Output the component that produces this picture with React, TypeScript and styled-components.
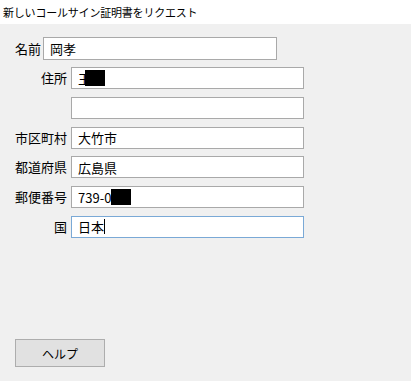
import styled, { createGlobalStyle } from "styled-components";

const GlobalStyle = createGlobalStyle`
  body {
    margin: 0;
    background: #f0f0f0;
    font-family: "Noto Sans CJK JP", "Noto Sans", sans-serif;
    color: #000;
  }
`;

const Window = styled.div`
  width: 411px;
  height: 381px;
  display: flex;
  flex-direction: column;
  background: #f0f0f0;
`;

const TitleBar = styled.div`
  height: 24px;
  background: #ffffff;
  display: flex;
  align-items: center;
  padding-left: 3px;
  font-size: 11px;
  letter-spacing: -0.2px;
`;

const Form = styled.div`
  display: flex;
  flex-direction: column;
  padding-top: 13px;
`;

const NameRow = styled.div`
  display: flex;
  align-items: center;
  gap: 2px;
  padding-left: 15px;
`;

const Fields = styled.div`
  display: flex;
  flex-direction: column;
  gap: 7.8px;
  margin-top: 7px;
`;

const Row = styled.div`
  display: flex;
  align-items: center;
  gap: 4px;
`;

const Label = styled.div<{ $width?: number }>`
  width: ${(p) => (p.$width ? `${p.$width}px` : "auto")};
  text-align: right;
  font-size: 13px;
  line-height: 22px;
`;

const TextBox = styled.div<{ $width: number; $height?: number; $focused?: boolean }>`
  box-sizing: border-box;
  width: ${(p) => p.$width}px;
  height: ${(p) => p.$height ?? 22}px;
  background: #ffffff;
  border: 1px solid ${(p) => (p.$focused ? "#7aa9d6" : "#a9a9a9")};
  padding-left: 6px;
  display: flex;
  align-items: center;
  font-size: 13px;
  white-space: nowrap;
`;

const Redacted = styled.span<{ $width: number; $shift?: number }>`
  display: inline-block;
  width: ${(p) => p.$width}px;
  height: 16px;
  background: #000;
  margin-left: ${(p) => p.$shift ?? 0}px;
`;

const Caret = styled.span`
  display: inline-block;
  width: 1px;
  height: 15px;
  background: #000;
`;

const Footer = styled.div`
  margin-top: auto;
  padding: 0 0 14px 15px;
`;

const HelpButton = styled.button`
  width: 90px;
  height: 28px;
  background: #e1e1e1;
  border: 1px solid #adadad;
  font-family: inherit;
  font-size: 12px;
  color: #000;
  padding: 0;
`;

export default function App() {
  return (
    <Window>
      <GlobalStyle />
      <TitleBar>新しいコールサイン証明書をリクエスト</TitleBar>
      <Form>
        <NameRow>
          <Label>名前</Label>
          <TextBox $width={234} $height={23}>
            岡孝
          </TextBox>
        </NameRow>
        <Fields>
          <Row>
            <Label $width={67}>住所</Label>
            <TextBox $width={233}>
              玉<Redacted $width={20} $shift={-6} />
            </TextBox>
          </Row>
          <Row>
            <Label $width={67} />
            <TextBox $width={233} />
          </Row>
          <Row>
            <Label $width={67}>市区町村</Label>
            <TextBox $width={233}>大竹市</TextBox>
          </Row>
          <Row>
            <Label $width={67}>都道府県</Label>
            <TextBox $width={233}>広島県</TextBox>
          </Row>
          <Row>
            <Label $width={67}>郵便番号</Label>
            <TextBox $width={233}>
              739-0<Redacted $width={20} />
            </TextBox>
          </Row>
          <Row>
            <Label $width={67}>国</Label>
            <TextBox $width={233} $focused>
              日本<Caret />
            </TextBox>
          </Row>
        </Fields>
      </Form>
      <Footer>
        <HelpButton>ヘルプ</HelpButton>
      </Footer>
    </Window>
  );
}
